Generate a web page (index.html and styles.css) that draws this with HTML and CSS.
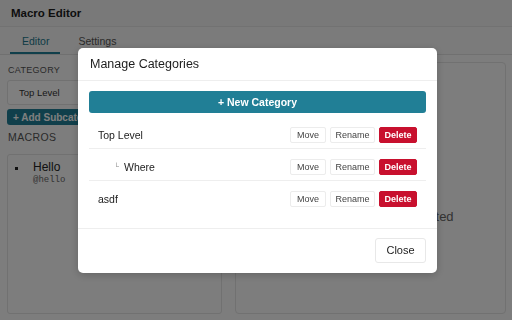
FILE: index.html
```html
<!DOCTYPE html>
<html>
<head>
<meta charset="utf-8">
<link rel="stylesheet" href="styles.css">
</head>
<body>
<div class="app">
  <header class="app-header">Macro Editor</header>
  <nav class="tabs">
    <div class="tab active">Editor</div>
    <div class="tab">Settings</div>
  </nav>
  <main class="content">
    <section class="sidebar">
      <div class="label">Category</div>
      <div class="select">Top Level</div>
      <button class="btn-teal-sm">+ Add Subcategory</button>
      <div class="label big">Macros</div>
      <div class="macro-list">
        <div class="macro">
          <span class="bullet"></span>
          <div>
            <div class="macro-name">Hello</div>
            <div class="macro-code">@hello</div>
          </div>
        </div>
      </div>
    </section>
    <section class="panel">
      <div class="empty">Select a macro to get started</div>
    </section>
  </main>
</div>

<div class="overlay">
  <div class="modal">
    <div class="modal-header">Manage Categories</div>
    <div class="modal-body">
      <button class="btn-new">+ New Category</button>
      <div class="cat-list">
        <div class="cat-row">
          <span class="cat-name">Top Level</span>
          <div class="actions"><button class="btn move">Move</button><button class="btn rename">Rename</button><button class="btn danger">Delete</button></div>
        </div>
        <div class="cat-row">
          <span class="cat-name sub"><span class="elbow">└</span>Where</span>
          <div class="actions"><button class="btn move">Move</button><button class="btn rename">Rename</button><button class="btn danger">Delete</button></div>
        </div>
        <div class="cat-row last">
          <span class="cat-name">asdf</span>
          <div class="actions"><button class="btn move">Move</button><button class="btn rename">Rename</button><button class="btn danger">Delete</button></div>
        </div>
      </div>
    </div>
    <div class="modal-footer"><button class="btn-close">Close</button></div>
  </div>
</div>
</body>
</html>
```
FILE: styles.css
```css
* { box-sizing: border-box; }
html, body { margin: 0; padding: 0; }
body {
  width: 512px;
  height: 320px;
  overflow: hidden;
  font-family: "Liberation Sans", Arial, sans-serif;
  color: #222;
  background: #fafafa;
}
button { font-family: inherit; cursor: pointer; }

.app { height: 320px; display: flex; flex-direction: column; }
.app-header {
  height: 27px;
  padding-left: 11px;
  display: flex;
  align-items: center;
  font-size: 11.5px;
  font-weight: 700;
  color: #1c1c1c;
  background: #f2f2f2;
  border-bottom: 1px solid #e4e4e4;
}
.tabs {
  height: 28px;
  display: flex;
  padding-left: 10px;
  border-bottom: 1px solid #e0e0e0;
  background: #f6f6f6;
}
.tab {
  padding: 0 11px 0 12px;
  display: flex;
  align-items: center;
  font-size: 10.5px;
  color: #555;
  margin-right: 6px;
}
.tab.active {
  color: #21778d;
  border-bottom: 2px solid #217f96;
  padding-top: 2px;
}
.content {
  flex: 1;
  display: grid;
  grid-template-columns: 215px 1fr;
  gap: 13px;
  padding: 7px 6px 6px 7px;
  min-height: 0;
}
.sidebar { display: flex; flex-direction: column; min-height: 0; }
.label {
  font-size: 9px;
  letter-spacing: 0.3px;
  text-transform: uppercase;
  color: #555;
  margin: 3px 0 5px 1px;
}
.label.big { font-size: 10.5px; letter-spacing: 0.4px; margin: 6px 0 11px 1px; }
.select {
  height: 25px;
  border: 1px solid #e2e2e2;
  border-radius: 3px;
  background: #fff;
  font-size: 9.5px;
  padding-left: 11px;
  display: flex;
  align-items: center;
  color: #333;
}
.btn-teal-sm {
  align-self: flex-start;
  margin-top: 4px;
  height: 16px;
  padding: 0 6px;
  border: none;
  border-radius: 3px;
  background: #217f96;
  color: #fff;
  font-size: 10px;
  font-weight: 700;
  white-space: nowrap;
}
.macro-list {
  flex: 1;
  border: 1px solid #e2e2e2;
  border-radius: 3px;
  background: #fafafa;
  padding: 5px 4px;
}
.macro { display: flex; align-items: flex-start; }
.bullet {
  width: 3px;
  height: 3px;
  background: #222;
  margin: 7px 15px 0 3px;
}
.macro-name { font-size: 12px; line-height: 14px; color: #222; }
.macro-code {
  font-family: "Liberation Mono", monospace;
  font-size: 9px;
  color: #666;
  margin-top: 1px;
}
.panel {
  border: 1px solid #e2e2e2;
  border-radius: 4px;
  background: #fafafa;
  display: flex;
  align-items: center;
  justify-content: center;
  padding-top: 56px;
}
.empty { font-size: 13px; color: #666; }

.overlay {
  position: fixed;
  inset: 0;
  background: rgba(0, 0, 0, 0.5);
  display: flex;
  align-items: center;
  justify-content: center;
}
.modal {
  width: 359px;
  background: #fff;
  border-radius: 5px;
  box-shadow: 0 2px 8px rgba(0, 0, 0, 0.2);
  margin-left: 3px;
}
.modal-header {
  height: 33px;
  padding-left: 12px;
  display: flex;
  align-items: center;
  font-size: 12.5px;
  font-weight: 500;
  color: #1d1d1d;
  border-bottom: 1px solid #eeeeee;
}
.modal-body { padding: 10px 11px 16px 11px; }
.btn-new {
  width: 100%;
  height: 22px;
  border: none;
  border-radius: 3px;
  background: #217f96;
  color: #fff;
  font-size: 10.5px;
  font-weight: 700;
}
.cat-list { margin-top: 7px; display: flex; flex-direction: column; gap: 3px; }
.cat-row {
  height: 29px;
  display: flex;
  align-items: center;
  justify-content: space-between;
  padding: 2px 9px 0 9px;
  border-bottom: 1px solid #eeeeee;
}
.cat-row.last { border-bottom: none; height: 28px; }
.cat-name { font-size: 10.5px; color: #222; }
.cat-name.sub { padding-left: 16px; }
.elbow { font-size: 7px; color: #888; margin-right: 5px; position: relative; top: -2px; }
.actions { display: flex; gap: 4px; }
.btn {
  height: 16px;
  padding: 0;
  border: 1px solid #ececec;
  border-radius: 2px;
  background: #fff;
  color: #444;
  font-size: 9px;
  line-height: 14px;
  text-align: center;
}
.btn.move { width: 36px; }
.btn.rename { width: 45px; }
.btn.danger {
  width: 38px;
  background: #c8102e;
  border-color: #c8102e;
  color: #fff;
  font-weight: 700;
}
.modal-footer {
  border-top: 1px solid #eeeeee;
  padding: 9px 11px 10px;
  display: flex;
  justify-content: flex-end;
}
.btn-close {
  width: 51px;
  height: 25px;
  border: 1px solid #e8e8e8;
  border-radius: 3px;
  background: #fff;
  color: #222;
  font-size: 11px;
}
```
